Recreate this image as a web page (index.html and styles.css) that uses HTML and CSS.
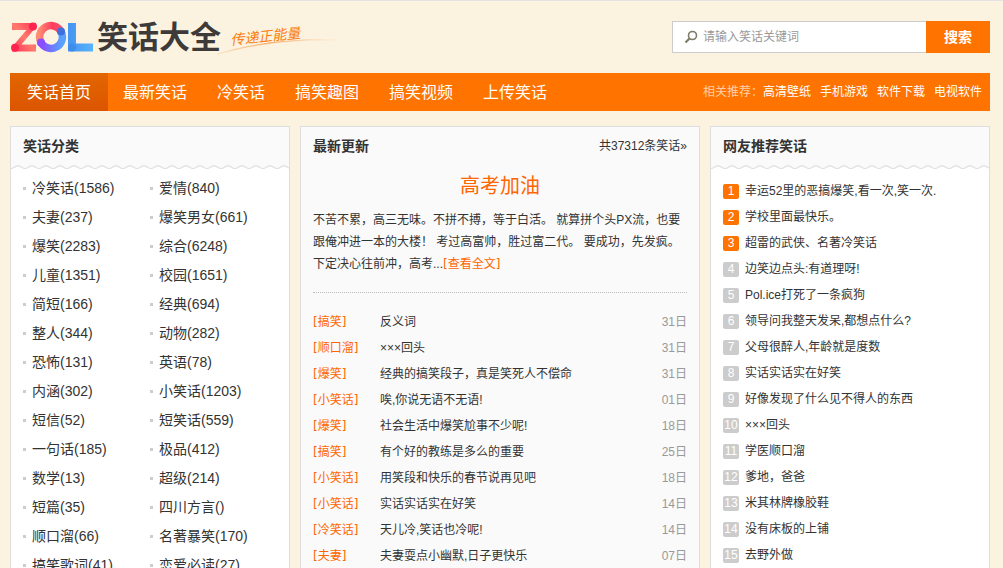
FILE: index.html
```html
<!DOCTYPE html>
<html lang="zh-CN">
<head>
<meta charset="utf-8">
<title>笑话大全</title>
<link rel="stylesheet" href="styles.css">
</head>
<body>
<div class="page">
  <header class="header">
    <a class="logo" href="#">
      <svg class="logo-mark" viewBox="0 0 84 32" width="84" height="32" role="img" aria-label="ZOL">
        <defs>
          <linearGradient id="z" x1="0" y1="1" x2="1" y2="0"><stop offset="0" stop-color="#ff2d55"/><stop offset=".5" stop-color="#ff7a6e"/><stop offset="1" stop-color="#ff3358"/></linearGradient>
          <linearGradient id="oTop" x1="0" y1="0" x2="1" y2="0"><stop offset="0" stop-color="#ff8a72"/><stop offset=".6" stop-color="#ff3b5f"/><stop offset="1" stop-color="#f0506e"/></linearGradient>
          <linearGradient id="oLow" x1="0" y1="0" x2="1" y2="0"><stop offset="0" stop-color="#8a4dff"/><stop offset="1" stop-color="#56a4ff"/></linearGradient>
          <linearGradient id="l" x1="0" y1="0" x2="1" y2="0"><stop offset="0" stop-color="#4798f2"/><stop offset="1" stop-color="#59b4ff"/></linearGradient>
        </defs>
        <path d="M2 2H26V6L11.500 23.500H26V30.500H2V26L16.500 9H2Z" fill="url(#z)"/>
        <circle cx="23" cy="5.500" r="4" fill="#ff2450"/>
        <circle cx="5" cy="26.700" r="4" fill="#ff2450"/>
        <path d="M31 21.500A11.400 11.400 0 1 1 51 10.500" fill="none" stroke="url(#oTop)" stroke-width="7.500"/>
        <path d="M51 10.500A11.400 11.400 0 0 1 31 21.500" fill="none" stroke="url(#oLow)" stroke-width="7.500"/>
        <circle cx="31" cy="21.500" r="4" fill="#8a4dff"/>
        <circle cx="51" cy="10.500" r="4" fill="#3c70dd"/>
        <path d="M62 2V26.500H83" fill="none" stroke="url(#l)" stroke-width="8"/>
        <circle cx="62" cy="26.500" r="4" fill="#3f8deb"/>
      </svg>
      <span class="logo-name">笑话大全</span>
      <svg class="logo-tag" viewBox="0 0 126 40" width="126" height="40">
        <defs>
          <linearGradient id="sw" x1="0" y1="0" x2="1" y2="0"><stop offset="0" stop-color="#fbdcb6"/><stop offset=".45" stop-color="#f5a55a"/><stop offset="1" stop-color="#fbf2df"/></linearGradient>
        </defs>
        <text class="tag-text" x="14" y="28" transform="rotate(-6 14 28)">传递正能量</text>
        <path d="M0 37Q55 20 122 23Q58 21 0 37Z" fill="url(#sw)" stroke="url(#sw)" stroke-width=".4"/>
      </svg>
    </a>
    <form class="search">
      <label class="search-box">
        <svg viewBox="0 0 14 14" width="14" height="14" aria-hidden="true"><circle cx="8.500" cy="5.500" r="4" fill="none" stroke="#7d7a68" stroke-width="1.600"/><path d="M5.500 8.500L1.500 12.500" stroke="#7d7a68" stroke-width="2.200"/></svg>
        <input class="search-input" type="text" placeholder="请输入笑话关键词" aria-label="请输入笑话关键词">
      </label>
      <button class="search-btn" type="button">搜索</button>
    </form>
  </header>

  <nav class="nav">
    <div class="nav-main">
      <a class="active" href="#">笑话首页</a><a href="#">最新笑话</a><a href="#">冷笑话</a><a href="#">搞笑趣图</a><a href="#">搞笑视频</a><a href="#">上传笑话</a>
    </div>
    <div class="nav-side">
      <span class="nav-label">相关推荐：</span>
      <a href="#">高清壁纸</a><a href="#">手机游戏</a><a href="#">软件下载</a><a href="#">电视软件</a>
    </div>
  </nav>

  <main class="columns">
    <section class="panel">
      <h2 class="panel-head">笑话分类</h2>
      <svg class="wave" width="100%" height="6" aria-hidden="true">
        <defs><pattern id="wave" width="14" height="6" patternUnits="userSpaceOnUse"><path d="M0 3.500C3 3.500 4 .8 7 .8S11 3.500 14 3.500V0H0Z" fill="#fafafa"/><path d="M0 3.500C3 3.500 4 .8 7 .8S11 3.500 14 3.500" fill="none" stroke="#dedede" stroke-width="1.200"/></pattern></defs>
        <rect width="100%" height="6" fill="url(#wave)"/>
      </svg>
      <ul class="cats">
        <li><a href="#">冷笑话(1586)</a></li><li><a href="#">爱情(840)</a></li>
        <li><a href="#">夫妻(237)</a></li><li><a href="#">爆笑男女(661)</a></li>
        <li><a href="#">爆笑(2283)</a></li><li><a href="#">综合(6248)</a></li>
        <li><a href="#">儿童(1351)</a></li><li><a href="#">校园(1651)</a></li>
        <li><a href="#">简短(166)</a></li><li><a href="#">经典(694)</a></li>
        <li><a href="#">整人(344)</a></li><li><a href="#">动物(282)</a></li>
        <li><a href="#">恐怖(131)</a></li><li><a href="#">英语(78)</a></li>
        <li><a href="#">内涵(302)</a></li><li><a href="#">小笑话(1203)</a></li>
        <li><a href="#">短信(52)</a></li><li><a href="#">短笑话(559)</a></li>
        <li><a href="#">一句话(185)</a></li><li><a href="#">极品(412)</a></li>
        <li><a href="#">数学(13)</a></li><li><a href="#">超级(214)</a></li>
        <li><a href="#">短篇(35)</a></li><li><a href="#">四川方言()</a></li>
        <li><a href="#">顺口溜(66)</a></li><li><a href="#">名著暴笑(170)</a></li>
        <li><a href="#">搞笑歌词(41)</a></li><li><a href="#">恋爱必读(27)</a></li>
      </ul>
    </section>

    <section class="panel panel-tint">
      <div class="panel-head">
        <h2>最新更新</h2>
        <a class="more" href="#">共37312条笑话»</a>
      </div>
      <article class="feature">
        <h3><a href="#">高考加油</a></h3>
        <p>不苦不累，高三无味。不拼不搏，等于白活。 就算拼个头PX流，也要跟俺冲进一本的大楼！ 考过高富帅，胜过富二代。 要成功，先发疯。 下定决心往前冲，高考...<a href="#">[查看全文]</a></p>
      </article>
      <ul class="news">
        <li><a class="tag" href="#">[搞笑]</a><a href="#">反义词</a><time>31日</time></li>
        <li><a class="tag" href="#">[顺口溜]</a><a href="#">×××回头</a><time>31日</time></li>
        <li><a class="tag" href="#">[爆笑]</a><a href="#">经典的搞笑段子，真是笑死人不偿命</a><time>31日</time></li>
        <li><a class="tag" href="#">[小笑话]</a><a href="#">唉,你说无语不无语!</a><time>01日</time></li>
        <li><a class="tag" href="#">[爆笑]</a><a href="#">社会生活中爆笑尬事不少呢!</a><time>18日</time></li>
        <li><a class="tag" href="#">[搞笑]</a><a href="#">有个好的教练是多么的重要</a><time>25日</time></li>
        <li><a class="tag" href="#">[小笑话]</a><a href="#">用笑段和快乐的春节说再见吧</a><time>18日</time></li>
        <li><a class="tag" href="#">[小笑话]</a><a href="#">实话实话实在好笑</a><time>14日</time></li>
        <li><a class="tag" href="#">[冷笑话]</a><a href="#">天儿冷,笑话也冷呢!</a><time>14日</time></li>
        <li><a class="tag" href="#">[夫妻]</a><a href="#">夫妻耍点小幽默,日子更快乐</a><time>07日</time></li>
      </ul>
    </section>

    <section class="panel">
      <h2 class="panel-head">网友推荐笑话</h2>
      <svg class="wave" width="100%" height="6" aria-hidden="true"><rect width="100%" height="6" fill="url(#wave)"/></svg>
      <ol class="rank">
        <li><span class="num hot">1</span><a href="#">幸运52里的恶搞爆笑,看一次,笑一次.</a></li>
        <li><span class="num hot">2</span><a href="#">学校里面最快乐。</a></li>
        <li><span class="num hot">3</span><a href="#">超雷的武侠、名著冷笑话</a></li>
        <li><span class="num">4</span><a href="#">边笑边点头:有道理呀!</a></li>
        <li><span class="num">5</span><a href="#">Pol.ice打死了一条疯狗</a></li>
        <li><span class="num">6</span><a href="#">领导问我整天发呆,都想点什么?</a></li>
        <li><span class="num">7</span><a href="#">父母很醉人,年龄就是度数</a></li>
        <li><span class="num">8</span><a href="#">实话实话实在好笑</a></li>
        <li><span class="num">9</span><a href="#">好像发现了什么见不得人的东西</a></li>
        <li><span class="num">10</span><a href="#">×××回头</a></li>
        <li><span class="num">11</span><a href="#">学医顺口溜</a></li>
        <li><span class="num">12</span><a href="#">爹地，爸爸</a></li>
        <li><span class="num">13</span><a href="#">米其林牌橡胶鞋</a></li>
        <li><span class="num">14</span><a href="#">没有床板的上铺</a></li>
        <li><span class="num">15</span><a href="#">去野外做</a></li>
      </ol>
    </section>
  </main>
</div>
</body>
</html>
```

FILE: styles.css
```css
* { box-sizing: border-box; }

body {
  margin: 0;
  border-top: 1px solid #e3e3e3;
  background: #fbf2df;
  color: #333;
  font: 12px/22px "Liberation Sans", "Noto Sans CJK SC", sans-serif;
}

a { color: inherit; text-decoration: none; }
ul, ol { margin: 0; padding: 0; list-style: none; }
h2, h3, p { margin: 0; }

.page { padding: 0 13px 0 10px; }

.header {
  display: flex;
  justify-content: space-between;
  padding: 20px 0;
}

.logo { display: flex; align-items: center; height: 32px; }
.logo-name {
  margin-left: 3px;
  padding-top: 2px;
  color: #3d3a39;
  font-size: 31px;
  font-weight: bold;
  line-height: 32px;
}
.logo-mark, .logo-tag { flex: none; }
.logo-tag { margin-left: -4px; }
.tag-text {
  fill: #f97d12;
  font-size: 14px;
  font-style: italic;
}

.search { display: flex; width: 318px; height: 32px; }
.search-box {
  display: flex;
  flex: 1;
  align-items: center;
  gap: 5px;
  padding-left: 11px;
  border: 1px solid #ccc;
  border-right: 0;
  background: #fff;
}
.search-input {
  flex: 1;
  min-width: 0;
  padding: 0;
  border: 0;
  outline: 0;
  background: none;
  font: inherit;
}
.search-input::placeholder { color: #999; }
.search-btn {
  width: 64px;
  padding: 0;
  border: 0;
  background: #ff7300;
  color: #fff;
  font: bold 14px/32px "Liberation Sans", "Noto Sans CJK SC", sans-serif;
}

.nav {
  display: flex;
  justify-content: space-between;
  height: 38px;
  background: #ff7300;
  color: #fff;
  line-height: 38px;
}
.nav-main { display: flex; font-size: 16px; line-height: 36px; }
.nav-main a { padding: 2px 15px 0; }
.nav-main .active {
  padding: 2px 17px 0;
  background: linear-gradient(#e26600, #dc5500);
}
.nav-side { display: flex; gap: 9px; padding-right: 8px; }
.nav-label { margin-right: -9px; color: #ffd0a6; }

.columns {
  display: grid;
  grid-template-columns: 7fr 10fr 7fr;
  gap: 10px;
  margin-top: 15px;
}
.panel { border: 1px solid #dedede; background: #fff; }
.panel-tint { background: #fafafa; }
.panel-head {
  display: flex;
  justify-content: space-between;
  height: 38px;
  padding: 0 12px;
  background: #fafafa;
  font-size: 14px;
  line-height: 38px;
}
.panel-head h2 { font-size: 14px; }
.more { font-size: 12px; }
.wave { display: block; }

.cats {
  display: grid;
  grid-template-columns: 1fr 1fr;
  padding: 3px 12px 12px;
  font-size: 14px;
  line-height: 29px;
}
.cats li { display: flex; align-items: center; gap: 6px; white-space: nowrap; }
.cats li::before { content: ""; width: 3px; height: 3px; background: #ccc; }

.feature {
  margin: 0 12px;
  padding: 6px 0 17px;
  border-bottom: 1px dotted #bbb;
}
.feature h3 {
  color: #f60;
  font-size: 20px;
  font-weight: normal;
  line-height: 30px;
  text-align: center;
}
.feature p { padding-top: 8px; }
.feature p a, .news .tag {
  color: #f60;
  font-family: "DejaVu Sans", "Noto Sans CJK SC", sans-serif;
}

.news { padding: 16px 12px; line-height: 26px; }
.news li { display: flex; }
.news .tag { width: 67px; }
.news time { margin-left: auto; color: #999; }

.rank { padding: 7px 12px; line-height: 26px; }
.rank li { display: flex; align-items: center; gap: 6px; }
.num {
  width: 16px;
  height: 15px;
  border-radius: 2px;
  background: #ccc;
  color: #fff;
  line-height: 15px;
  text-align: center;
}
.hot { background: #ff7300; }
```
